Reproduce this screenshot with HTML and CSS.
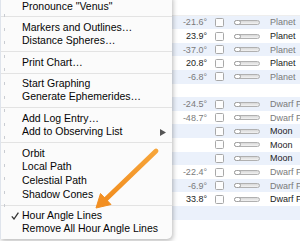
FILE: index.html
```html
<!DOCTYPE html>
<html>
<head>
<meta charset="utf-8">
<link rel="stylesheet" href="styles.css">
</head>
<body>
<div class="window">
  <div class="table">
    <div class="thead"></div>
    <div class="row alt dim"><span class="val">-21.6°</span><span class="cb"></span><span class="sl"></span><span class="type">Planet</span></div>
    <div class="row"><span class="val">23.9°</span><span class="cb"></span><span class="sl"></span><span class="type">Planet</span></div>
    <div class="row alt dim"><span class="val">-37.0°</span><span class="cb"></span><span class="sl"></span><span class="type">Planet</span></div>
    <div class="row"><span class="val">20.8°</span><span class="cb"></span><span class="sl"></span><span class="type">Planet</span></div>
    <div class="row alt dim"><span class="val">-6.8°</span><span class="cb"></span><span class="sl"></span><span class="type">Planet</span></div>
    <div class="row"></div>
    <div class="row alt dim"><span class="val">-24.5°</span><span class="cb"></span><span class="sl"></span><span class="type">Dwarf Planet</span></div>
    <div class="row dim"><span class="val">-48.7°</span><span class="cb"></span><span class="sl"></span><span class="type">Dwarf Planet</span></div>
    <div class="row alt"><span class="val"></span><span class="cb"></span><span class="sl"></span><span class="type">Moon</span></div>
    <div class="row"><span class="val"></span><span class="cb"></span><span class="sl"></span><span class="type">Moon</span></div>
    <div class="row alt"><span class="val"></span><span class="cb"></span><span class="sl"></span><span class="type">Moon</span></div>
    <div class="row dim"><span class="val">-22.4°</span><span class="cb"></span><span class="sl"></span><span class="type">Dwarf Planet</span></div>
    <div class="row alt dim"><span class="val">-6.9°</span><span class="cb"></span><span class="sl"></span><span class="type">Dwarf Planet</span></div>
    <div class="row"><span class="val">33.8°</span><span class="cb"></span><span class="sl"></span><span class="type">Dwarf Planet</span></div>
    <div class="row alt"></div>
    <div class="row"></div>
  </div>

  <div class="menu">
    <div class="item">Pronounce "Venus"</div>
    <div class="sep"></div>
    <div class="item">Markers and Outlines…</div>
    <div class="item">Distance Spheres…</div>
    <div class="sep"></div>
    <div class="item">Print Chart…</div>
    <div class="sep"></div>
    <div class="item">Start Graphing</div>
    <div class="item">Generate Ephemerides…</div>
    <div class="sep"></div>
    <div class="item">Add Log Entry…</div>
    <div class="item sub">Add to Observing List<svg class="subarrow" width="6" height="7" viewBox="0 0 6 7"><path d="M0 0 L6 3.5 L0 7 Z" fill="#555"/></svg></div>
    <div class="sep"></div>
    <div class="item">Orbit</div>
    <div class="item">Local Path</div>
    <div class="item">Celestial Path</div>
    <div class="item">Shadow Cones</div>
    <div class="sep"></div>
    <div class="item checked"><svg class="check" width="8" height="8" viewBox="0 0 8 8"><path d="M0.8 4.4 L3 7 L7.4 0.6" fill="none" stroke="#333" stroke-width="1.3"/></svg>Hour Angle Lines</div>
    <div class="item">Remove All Hour Angle Lines</div>
  </div>

  <svg class="arrow" width="300" height="241" viewBox="0 0 300 241">
    <defs>
      <linearGradient id="og" x1="0" y1="0" x2="0" y2="1">
        <stop offset="0" stop-color="#f7a53a"/>
        <stop offset="1" stop-color="#f18d1f"/>
      </linearGradient>
    </defs>
    <line x1="156" y1="151" x2="104" y2="201" stroke="url(#og)" stroke-width="4.8" stroke-linecap="round"/>
    <polygon points="96,208 111,204.5 100.5,193.5" fill="#f28f22" stroke="#f28f22" stroke-width="1" stroke-linejoin="round"/>
  </svg>
</div>
</body>
</html>
```
FILE: styles.css
```css
html, body {
  margin: 0;
  padding: 0;
  background: #ffffff;
}

.window {
  position: relative;
  width: 300px;
  height: 241px;
  overflow: hidden;
  background: #ffffff;
  font-family: "Liberation Sans", Arial, sans-serif;
}

.table {
  display: flex;
  flex-direction: column;
}

.thead {
  height: 15.7px;
  box-sizing: border-box;
  border-bottom: 1px solid #eeeeee;
  background: #ffffff;
}

.row {
  height: 13.6px;
  display: flex;
  align-items: center;
  font-size: 9px;
  color: #1c1c1c;
  white-space: nowrap;
  background: #ffffff;
}

.row.alt {
  background: #ebf1fb;
}

.row.dim {
  color: #7a7a7a;
}

.val {
  width: 32px;
  margin-left: 175px;
  text-align: right;
  flex: none;
}

.cb {
  flex: none;
  width: 7px;
  height: 7px;
  margin-left: 8px;
  border: 1px solid #a8a8a8;
  border-radius: 1.5px;
  background: #fdfdfd;
}

.sl {
  flex: none;
  position: relative;
  width: 24px;
  height: 3px;
  margin-left: 10px;
  border: 1px solid #b0b0b0;
  border-radius: 3px;
  background: linear-gradient(#d8d8d8, #f2f2f2);
}

.sl::before {
  content: "";
  position: absolute;
  left: 0;
  top: -1px;
  width: 5px;
  height: 3px;
  border: 1px solid #a0a0a0;
  border-radius: 3px;
  background: #ffffff;
  margin-left: -1px;
}

.type {
  flex: none;
  margin-left: 10px;
}

.menu {
  position: absolute;
  left: 0;
  top: -4.5px;
  width: 172px;
  padding: 4px 0 3px 0;
  box-sizing: border-box;
  background: #fbfbfb;
  border-left: 1px solid #dfe4ec;
  border-radius: 0 0 5px 0;
  box-shadow: 1px 2px 5px rgba(0, 0, 0, 0.28);
  font-size: 10.5px;
  color: #050505;
}

.menu::before {
  content: "";
  position: absolute;
  left: 3px;
  top: 18px;
  width: 1px;
  height: 200px;
  background: repeating-linear-gradient(to bottom, #c9ccd2 0, #c9ccd2 3px, transparent 3px, transparent 13.6px);
}

.item {
  position: relative;
  height: 13.7px;
  line-height: 13.7px;
  padding-left: 21px;
  white-space: nowrap;
}

.sep {
  height: 1px;
  margin: 3.25px 0;
  background: #e3e3e3;
}

.subarrow {
  position: absolute;
  left: 159px;
  top: 3.5px;
}

.check {
  position: absolute;
  left: 10px;
  top: 3px;
}

.arrow {
  position: absolute;
  left: 0;
  top: 0;
}
```
